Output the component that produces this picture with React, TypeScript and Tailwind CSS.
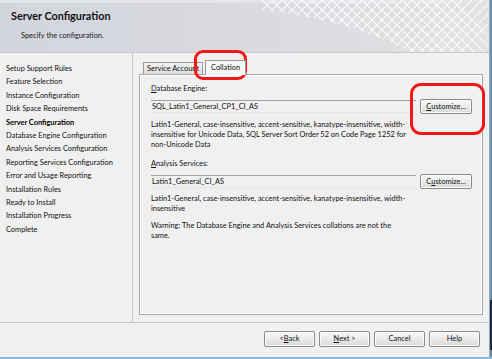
import React from "react";

const navItems = [
  "Setup Support Rules",
  "Feature Selection",
  "Instance Configuration",
  "Disk Space Requirements",
  "Server Configuration",
  "Database Engine Configuration",
  "Analysis Services Configuration",
  "Reporting Services Configuration",
  "Error and Usage Reporting",
  "Installation Rules",
  "Ready to Install",
  "Installation Progress",
  "Complete",
];

function Btn({ children, className = "" }: { children: React.ReactNode; className?: string }) {
  return (
    <div
      className={
        "flex items-center justify-center rounded-[2px] border border-[#8a8a8a] bg-gradient-to-b from-[#f6f6f6] via-[#ebebeb] to-[#d8d8d8] text-[7.4px] text-[#111] shadow-[inset_0_0_0_1px_#fbfbfb] " +
        className
      }
    >
      {children}
    </div>
  );
}

function Mesh() {
  const lines = [];
  for (let i = -10; i < 20; i++) {
    lines.push(
      <path key={"a" + i} d={`M${i * 10} 0 Q ${i * 10 + 30} 30 ${i * 10 + 60} 60`} stroke="#ffffff" strokeWidth="1.2" fill="none" opacity="0.8" />
    );
    lines.push(
      <path key={"b" + i} d={`M${i * 10 + 60} 0 Q ${i * 10 + 30} 30 ${i * 10} 60`} stroke="#ffffff" strokeWidth="1.2" fill="none" opacity="0.8" />
    );
  }
  return (
    <svg className="absolute right-0 top-0" width="230" height="53" viewBox="0 0 230 53">
      <defs>
        <clipPath id="c">
          <path d="M0 0 H230 V53 H150 Q90 20 0 10 Z" />
        </clipPath>
      </defs>
      <g clipPath="url(#c)">{lines}</g>
    </svg>
  );
}

export default function App() {
  return (
    <div
      className="relative h-[359px] w-[492px] overflow-hidden bg-[#f0f0f0] text-[#111]"
      style={{ fontFamily: 'Lato, "Noto Sans", sans-serif' }}
    >
      {/* Header */}
      <div className="relative h-[53px] overflow-hidden border-b border-[#c9c9c9] bg-gradient-to-r from-[#d3d5dd] via-[#d9dae0] to-[#e2e2e2]">
        <div className="absolute left-0 right-0 top-0 h-[3px] bg-[#e4e5ea]" />
        <Mesh />
        <div className="relative pl-[11px] pt-[9px] text-[10.8px] font-bold leading-[14px] text-[#111]">Server Configuration</div>
        <div className="relative pl-[21px] pt-[8px] text-[7.4px] leading-[10px] text-[#1a1a1a]">Specify the configuration.</div>
      </div>

      {/* Body */}
      <div className="flex h-[269px]">
        <div className="w-[133px] shrink-0 border-r border-[#c8c8c8] pl-[6px] pt-[9px]">
          {navItems.map((t) => (
            <div
              key={t}
              className={
                "h-[13.4px] whitespace-nowrap text-[7.4px] leading-[13px] " +
                (t === "Server Configuration" ? "font-bold text-[#000]" : "text-[#111]")
              }
            >
              {t}
            </div>
          ))}
        </div>

        <div className="relative flex flex-1 flex-col pl-[6px] pr-[10px] pt-[8px]">
          {/* Tabs */}
          <div className="flex h-[13px] items-end pl-[4px]">
            <div className="flex h-[12px] items-center border border-b-0 border-[#9a9a9a] bg-gradient-to-b from-[#f2f2f2] to-[#dedede] px-[3px] text-[7.4px] leading-none">
              Service Account
            </div>
            <div className="relative z-10 -mb-px ml-[2px] flex h-[15px] items-center border border-b-0 border-[#9a9a9a] bg-[#f6f6f6] px-[5px] text-[7.4px] leading-none">
              Collation
            </div>
          </div>
          {/* Panel */}
          <div className="h-[241px] border border-[#a8a8a8] shadow-[inset_0_0_0_1px_#ffffff] pl-[11px] pr-[10px] pt-[9px] text-[7.4px] leading-[10px]">
            <div>
              <span className="underline">D</span>atabase Engine:
            </div>
            <div className="mt-[5px] flex items-center">
              <div className="flex h-[13px] w-[265px] items-center border-t border-[#a0a0a0] border-b border-b-[#e6e6e6] bg-[#f0f0f0] pl-[1px]">
                SQL_Latin1_General_CP1_CI_AS
              </div>
              <Btn className="ml-[4px] h-[15px] w-[52px]">
                <span className="underline">C</span>ustomize...
              </Btn>
            </div>
            <div className="mt-[6px] pr-[12px]">
              Latin1-General, case-insensitive, accent-sensitive, kanatype-insensitive, width-
              <br />
              insensitive for Unicode Data, SQL Server Sort Order 52 on Code Page 1252 for
              <br />
              non-Unicode Data
            </div>
            <div className="mt-[9px]">
              <span className="underline">A</span>nalysis Services:
            </div>
            <div className="mt-[5px] flex items-center">
              <div className="flex h-[13px] w-[265px] items-center border-t border-[#a0a0a0] border-b border-b-[#e6e6e6] bg-[#f0f0f0] pl-[1px]">
                Latin1_General_CI_AS
              </div>
              <Btn className="ml-[4px] h-[15px] w-[52px]">
                C<span className="underline">u</span>stomize...
              </Btn>
            </div>
            <div className="mt-[5px]">
              Latin1-General, case-insensitive, accent-sensitive, kanatype-insensitive, width-
              <br />
              insensitive
            </div>
            <div className="mt-[7px]">
              Warning: The Database Engine and Analysis Services collations are not the
              <br />
              same.
            </div>
          </div>

          {/* Red highlight rings */}
          <div className="absolute left-[61px] top-[-3px] h-[30px] w-[53px] rounded-[9px] border-[3px] border-[#f01818]" />
          <div className="absolute left-[277px] top-[30px] h-[52px] w-[75px] rounded-[11px] border-[3px] border-[#f01818]" />
        </div>
      </div>

      {/* Footer */}
      <div className="flex h-[35px] justify-end border-t border-[#c8c8c8] pr-[12px] pt-[8px]">
        <div className="flex gap-[4px]">
          <Btn className="h-[16px] w-[51px]">
            &lt; <span className="underline">B</span>ack
          </Btn>
          <Btn className="h-[16px] w-[51px]">
            <span className="underline">N</span>ext &gt;
          </Btn>
          <Btn className="h-[16px] w-[51px]">Cancel</Btn>
          <Btn className="h-[16px] w-[51px]">Help</Btn>
        </div>
      </div>

      {/* Window frame */}
      <div className="absolute right-0 top-0 h-full w-[3px] bg-gradient-to-r from-[#9ab3c8] to-[#5a7a95]" />
      <div className="absolute right-0 top-[300px] h-[50px] w-[2px] bg-[#1a2a3a]" />
      <div className="absolute bottom-0 left-0 h-[2px] w-full bg-[#86bedf]" />
    </div>
  );
}
